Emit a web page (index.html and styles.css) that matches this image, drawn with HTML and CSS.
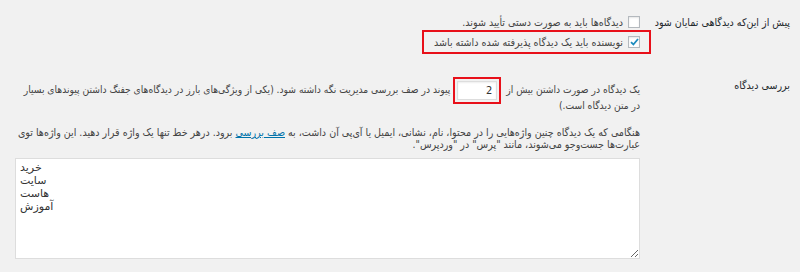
FILE: index.html
```html
<!DOCTYPE html>
<html lang="fa" dir="rtl">
<head>
    <meta charset="UTF-8">
    <title>تنظیمات گفتگو</title>
    <link rel="stylesheet" href="styles.css">
</head>
<body>
    <div class="form-table">
        <!-- before a comment appears -->
        <div class="row">
            <div class="th">پیش از این‌که دیدگاهی نمایان شود</div>
            <div class="td">
                <label class="check-line">
                    <span class="checkbox"></span>
                    دیدگاه‌ها باید به صورت دستی تأیید شوند.
                </label>
                <div class="highlight">
                    <label class="check-line">
                        <span class="checkbox checked">
                            <svg width="9" height="8" viewBox="0 0 9 8"><path d="M1 4.2 L3.4 6.5 L8 1" fill="none" stroke="#1e8cbe" stroke-width="1.8"/></svg>
                        </span>
                        نویسنده باید یک دیدگاه پذیرفته شده داشته باشد
                    </label>
                </div>
            </div>
        </div>

        <!-- comment moderation -->
        <div class="row second">
            <div class="th">بررسی دیدگاه</div>
            <div class="td">
                <p class="links-line">یک دیدگاه در صورت داشتن بیش از <span class="highlight-input"><input type="text" class="small-text" value="2"></span>پیوند در صف بررسی مدیریت نگه داشته شود. (یکی از ویژگی‌های بارز در دیدگاه‌های جفنگ داشتن پیوندهای بسیار در متن دیدگاه است.)</p>
                <p class="description">هنگامی که یک دیدگاه چنین واژه‌هایی را در محتوا، نام، نشانی، ایمیل یا آی‌پی آن داشت، به <a href="#">صف بررسی</a> برود. درهر خط تنها یک واژه قرار دهید. این واژه‌ها توی عبارت‌ها جست‌وجو می‌شوند، مانند "پرس" در "وردپرس".</p>
                <textarea class="keys" dir="ltr">خرید
سایت
هاست
آموزش</textarea>
            </div>
        </div>
    </div>
</body>
</html>
```

FILE: styles.css
```css
/* General styling */
* {
    margin: 0;
    padding: 0;
    box-sizing: border-box;
}

body {
    background-color: #f1f1f1;
    color: #444;
    font-family: "DejaVu Sans Condensed", "DejaVu Sans", sans-serif;
    font-size: 10.6px;
    line-height: 13px;
}

.form-table {
    padding: 16px 10px 0 0;
}

.row {
    display: flex;
}

.row.second {
    margin-top: 25px;
}

.th {
    width: 150px;
    flex-shrink: 0;
    color: #23282d;
}

.td {
    width: 632px;
}

.check-line {
    display: flex;
    align-items: center;
    gap: 5px;
    height: 12px;
}

.checkbox {
    width: 12px;
    height: 12px;
    border: 1px solid #b4b9be;
    background-color: #fff;
    box-shadow: inset 0 1px 2px rgba(0, 0, 0, 0.1);
    display: inline-flex;
    align-items: center;
    justify-content: center;
}

/* red annotation boxes */
.highlight {
    display: inline-block;
    margin: 2px -11px 0 0;
    padding: 4px 9px 4px 10px;
    border: 2px solid #e8101a;
}

.links-line {
    width: 622px;
    margin-top: 3px;
    font-size: 10.2px;
    line-height: 16px;
}

.highlight-input {
    display: inline-block;
    border: 2px solid #e8101a;
    padding: 2px;
    margin: -6px 2px -6px 3px;
    vertical-align: middle;
}

.small-text {
    display: block;
    width: 40px;
    height: 19px;
    border: 1px solid #ddd;
    background-color: #fff;
    box-shadow: inset 0 1px 2px rgba(0, 0, 0, 0.07);
    font-family: inherit;
    font-size: 11px;
    color: #333;
    padding: 0 4px;
    outline: none;
}

.description {
    margin-top: 12px;
    line-height: 12px;
}

.description a {
    color: #0073aa;
}

.keys {
    display: block;
    margin-top: 8px;
    width: 625px;
    height: 101px;
    border: 1px solid #ddd;
    background-color: #fff;
    font-family: "DejaVu Sans", sans-serif;
    font-size: 11px;
    line-height: 13px;
    color: #333;
    padding: 2px 4px 0;
    resize: vertical;
    outline: none;
}
```
